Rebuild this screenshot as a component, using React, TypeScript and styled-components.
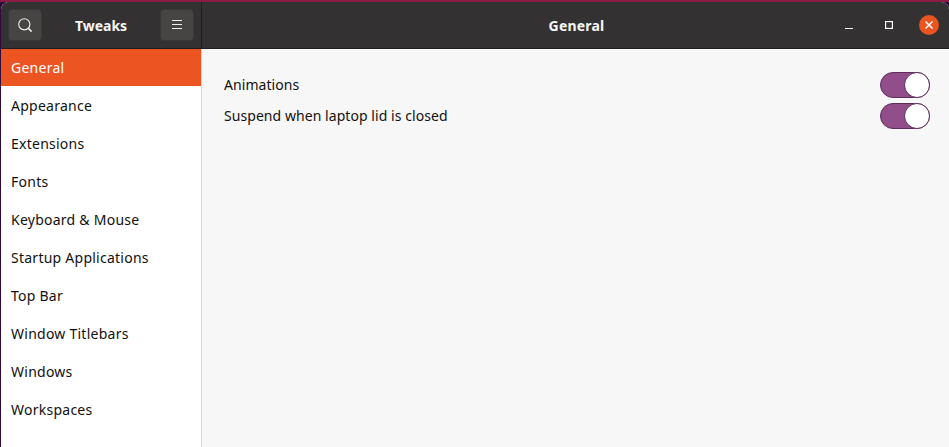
import styled, { createGlobalStyle } from 'styled-components'

const GlobalStyle = createGlobalStyle`
  html, body {
    margin: 0;
    padding: 0;
    background: #300a3a;
  }
  body {
    font-family: "Noto Sans", "Open Sans", "Liberation Sans", sans-serif;
  }
`
const Desktop = styled.div`
  width: 949px;
  height: 447px;
  overflow: hidden;
  display: flex;
  flex-direction: column;
  background: linear-gradient(#8a1b45 0, #8a1b45 2px, #2f0a3a 2px);
  padding: 2px 0 0 1px;
  box-sizing: border-box;
`
const Window = styled.div`
  flex: 1;
  display: flex;
  flex-direction: column;
  border-radius: 8px 8px 0 0;
  overflow: hidden;
  background: #f7f7f7;
`
const Header = styled.header`
  height: 46px;
  display: flex;
  background: #333131;
  border-bottom: 1px solid #1f1d1d;
  flex-shrink: 0;
`
const SideHeader = styled.div`
  width: 201px;
  padding: 7px 7px 0 7px;
  box-sizing: border-box;
  display: flex;
  justify-content: space-between;
  align-items: flex-start;
  border-right: 1px solid #1f1d1d;
`
const HeadButton = styled.button`
  width: 34px;
  height: 32px;
  padding: 0;
  display: flex;
  align-items: center;
  justify-content: center;
  background: #474543;
  border: 1px solid #3b3937;
  border-radius: 4px;
`
const AppTitle = styled.span`
  color: #f5f5f5;
  font-size: 14px;
  font-weight: 700;
  line-height: 34px;
`
const MainHeader = styled.div`
  flex: 1;
  display: flex;
  align-items: center;
  justify-content: space-between;
  padding: 0 10px 0 0;
`
const MainTitle = styled.span`
  flex: 1;
  text-align: center;
  padding-left: 112px;
  color: #f5f5f5;
  font-size: 14px;
  font-weight: 700;
  letter-spacing: 0.2px;
`
const WindowControls = styled.div`
  display: flex;
  align-items: center;
  gap: 20px;
`
const ControlIcon = styled.span`
  width: 20px;
  height: 20px;
  display: flex;
  align-items: center;
  justify-content: center;
`
const CloseButton = styled.span`
  width: 20px;
  height: 20px;
  border-radius: 50%;
  background: #e95420;
  display: flex;
  align-items: center;
  justify-content: center;
`
const Body = styled.div`
  flex: 1;
  display: flex;
  min-height: 0;
`
const Sidebar = styled.nav`
  width: 201px;
  background: #fff;
  border-right: 1px solid #dcdad8;
  flex-shrink: 0;
  box-sizing: border-box;
`
const SideItem = styled.div<{ $active?: boolean }>`
  height: ${(p) => (p.$active ? '37px' : '38px')};
  margin-bottom: ${(p) => (p.$active ? '1px' : '0')};
  line-height: 37px;
  padding-left: 10px;
  font-size: 14px;
  letter-spacing: 0.25px;
  color: ${(p) => (p.$active ? '#ffffff' : '#111111')};
  background: ${(p) => (p.$active ? '#ec5522' : 'transparent')};
`
const Content = styled.main`
  flex: 1;
  padding: 20px 19px 0 22px;
  display: flex;
  flex-direction: column;
  gap: 1px;
`
const Row = styled.div`
  height: 30px;
  display: flex;
  align-items: center;
  justify-content: space-between;
  font-size: 14px;
  letter-spacing: 0.06px;
  color: #111;
`
const Switch = styled.div`
  width: 50px;
  height: 26px;
  margin-top: 2px;
  box-sizing: border-box;
  border-radius: 13px;
  background: #924d8b;
  border: 1px solid #5e2c5a;
  display: flex;
  justify-content: flex-end;
  align-items: center;
`
const Knob = styled.div`
  width: 26px;
  height: 26px;
  margin: -1px;
  box-sizing: border-box;
  border-radius: 50%;
  background: #fff;
  border: 1px solid #5e2c5a;
`

const items = [
  'General',
  'Appearance',
  'Extensions',
  'Fonts',
  'Keyboard & Mouse',
  'Startup Applications',
  'Top Bar',
  'Window Titlebars',
  'Windows',
  'Workspaces',
]

export default function App() {
  return (
    <Desktop>
      <GlobalStyle />
      <Window>
        <Header>
          <SideHeader>
            <HeadButton>
              <svg width="16" height="16" viewBox="0 0 16 16" fill="none" stroke="#eeeeec" strokeWidth="1.1">
                <circle cx="7.3" cy="7.3" r="5.6" />
                <path d="M11.4 11.4 L14.6 14.6" strokeWidth="1.5" />
              </svg>
            </HeadButton>
            <AppTitle>Tweaks</AppTitle>
            <HeadButton>
              <svg width="12" height="12" viewBox="0 0 12 12" stroke="#eeeeec" strokeWidth="1">
                <path d="M1 1.5 H11 M1 5.5 H11 M1 9.5 H11" />
              </svg>
            </HeadButton>
          </SideHeader>
          <MainHeader>
            <MainTitle>General</MainTitle>
            <WindowControls>
              <ControlIcon>
                <svg width="10" height="10" viewBox="0 0 10 10" stroke="#fff" strokeWidth="1">
                  <path d="M1 8.5 H9" />
                </svg>
              </ControlIcon>
              <ControlIcon>
                <svg width="10" height="10" viewBox="0 0 10 10" fill="none" stroke="#fff" strokeWidth="1.2">
                  <rect x="1.6" y="1.6" width="6.8" height="6.8" />
                </svg>
              </ControlIcon>
              <CloseButton>
                <svg width="10" height="10" viewBox="0 0 10 10" stroke="#fff" strokeWidth="1.5">
                  <path d="M1.5 1.5 L8.5 8.5 M8.5 1.5 L1.5 8.5" />
                </svg>
              </CloseButton>
            </WindowControls>
          </MainHeader>
        </Header>
        <Body>
          <Sidebar>
            {items.map((item, i) => (
              <SideItem key={item} $active={i === 0}>
                {item}
              </SideItem>
            ))}
          </Sidebar>
          <Content>
            <Row>
              Animations
              <Switch>
                <Knob />
              </Switch>
            </Row>
            <Row>
              Suspend when laptop lid is closed
              <Switch>
                <Knob />
              </Switch>
            </Row>
          </Content>
        </Body>
      </Window>
    </Desktop>
  )
}
